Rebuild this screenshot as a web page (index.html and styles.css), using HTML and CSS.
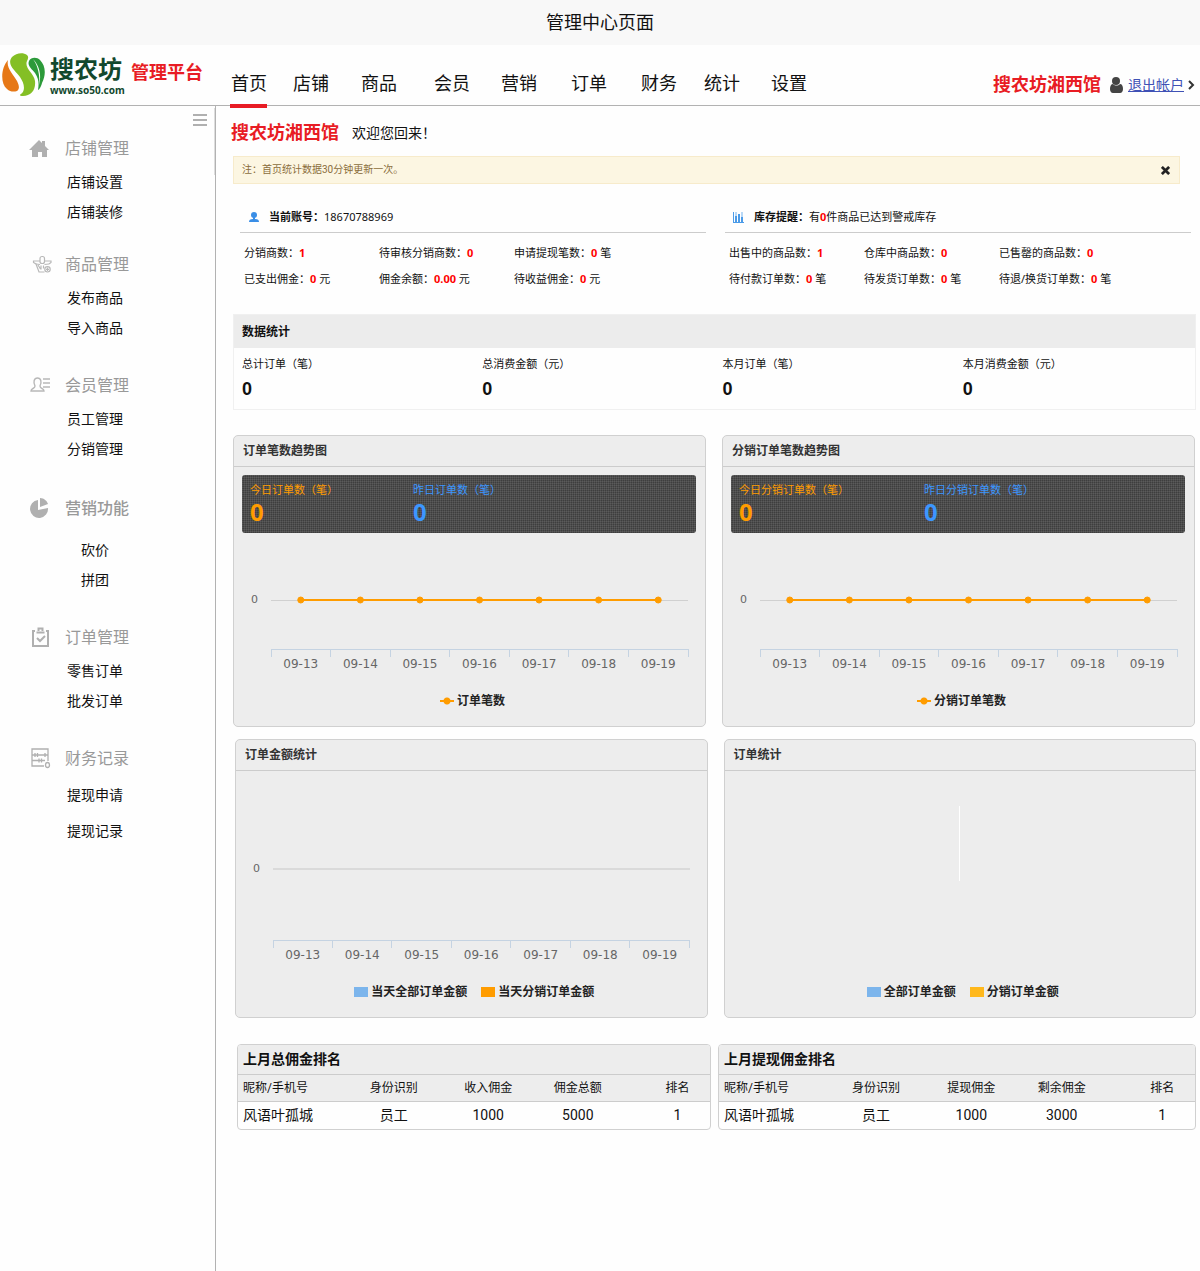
FILE: index.html
```html
<!DOCTYPE html>
<html lang="zh-CN">
<head>
<meta charset="utf-8">
<meta name="viewport" content="width=device-width, initial-scale=1">
<title>管理中心页面</title>
<link rel="stylesheet" href="styles.css">
</head>
<body>
<div class="page-title">管理中心页面</div>

<header class="header">
  <div class="brand">
    <svg class="brand-logo" viewBox="0 0 43 43" aria-hidden="true">
      <path fill="#e67817" d="M6 7C-1 15-2 30 5 36c3 3 7 3 10 2 3-2 2-6 0-10C11 21 4 15 6 7z"/>
      <path fill="#84bf25" d="M10 4c4-4 11-5 15-2 2 2 1 4 0 6-3 7 7 12 8 20 1 9-4 15-12 15-3 0-4-1-2-2 5-4 3-11-1-17C14 18 4 12 10 4z"/>
      <path fill="#2c9a3a" d="M27 8c2-4 8-4 11-1 6 6 6 15 2 23-1 4-3 7-4 7 1-6 1-11-3-17-3-4-8-7-6-12z"/>
      <path fill="#fff" d="M31 6c6 6 9 16 6 26 1-10-1-19-6-26z"/>
    </svg>
    <div class="brand-text">
      <span class="brand-name">搜农坊</span>
      <span class="brand-url">www.so50.com</span>
    </div>
    <span class="brand-sub">管理平台</span>
  </div>
  <nav class="nav">
    <a class="nav-link nav-link--active" href="#">首页</a>
    <a class="nav-link" href="#">店铺</a>
    <a class="nav-link" href="#">商品</a>
    <a class="nav-link" href="#">会员</a>
    <a class="nav-link" href="#">营销</a>
    <a class="nav-link" href="#">订单</a>
    <a class="nav-link" href="#">财务</a>
    <a class="nav-link" href="#">统计</a>
    <a class="nav-link" href="#">设置</a>
  </nav>
  <div class="account">
    <span class="account-shop">搜农坊湘西馆</span>
    <svg class="account-user" viewBox="0 0 13 16" aria-hidden="true"><circle cx="6" cy="4" r="4" fill="#444"/><path fill="#444" d="M3 7C1 7 0 9 0 12c0 2 1 4 3 4h7c2 0 3-2 3-4 0-3-1-5-3-5-2 2-5 2-7 0z"/></svg>
    <a class="account-exit" href="#">退出帐户</a>
    <svg class="account-arrow" viewBox="0 0 8 10" aria-hidden="true"><path d="M2 1l4 4-4 4" fill="none" stroke="#333" stroke-width="2"/></svg>
  </div>
</header>

<div class="layout">
  <aside class="sidebar">
    <button class="sidebar-toggle" type="button" aria-label="收起菜单"><span></span><span></span><span></span></button>
    <nav class="menu">
      <section class="group">
        <h2 class="group-title">
          <svg class="group-icon" viewBox="0 0 20 20" aria-hidden="true"><path fill="#b0b0b0" d="M10 1l3 3V2h3v5l4 4h-2v7h-5v-5H9v5H3v-7H0z"/></svg>店铺管理</h2>
        <ul class="group-list"><li><a href="#">店铺设置</a></li><li><a href="#">店铺装修</a></li></ul>
      </section>
      <section class="group">
        <h2 class="group-title">
          <svg class="group-icon" viewBox="0 0 20 20" aria-hidden="true"><g fill="none" stroke="#b8b8b8" stroke-width="1.200"><path d="M11 6H4.500v1.500L7 9l3 8h5.500M15.500 6H22v1.500L20 9"/><rect x="11" y="1.500" width="4.500" height="7" rx="2"/><path d="M9 10l2.500 4M12 10.500v4M14.500 10.500v3M7 9l4 .5M15.500 9.500L20 9"/><circle cx="18.500" cy="14.300" r="2.700"/><path d="M18.500 12.500v3.500M17 14.300h3"/></g></svg>商品管理</h2>
        <ul class="group-list"><li><a href="#">发布商品</a></li><li><a href="#">导入商品</a></li></ul>
      </section>
      <section class="group">
        <h2 class="group-title">
          <svg class="group-icon" viewBox="0 0 20 20" aria-hidden="true"><g fill="none" stroke="#b8b8b8" stroke-width="1.400"><path d="M6 10c-2-4-1-8 2.500-8s4.500 4 2.500 8c0 3 4 2 4 5H2c0-3 4-2 4-5z"/><path d="M14 3h7M14 7h7M14 11h7"/></g></svg>会员管理</h2>
        <ul class="group-list"><li><a href="#">员工管理</a></li><li><a href="#">分销管理</a></li></ul>
      </section>
      <section class="group group--center">
        <h2 class="group-title">
          <svg class="group-icon" viewBox="0 0 20 20" aria-hidden="true"><path fill="#b0b0b0" d="M9 1a9 9 0 1 0 10 8l-10 2z"/><path fill="#b0b0b0" d="M11-1v9l8-3c-1-3-4-6-8-6z"/></svg>营销功能</h2>
        <ul class="group-list"><li><a href="#">砍价</a></li><li><a href="#">拼团</a></li></ul>
      </section>
      <section class="group">
        <h2 class="group-title">
          <svg class="group-icon" viewBox="0 0 20 20" aria-hidden="true"><g fill="none" stroke="#b0b0b0" stroke-width="2"><path d="M6 3H4v15h15V3h-2"/><path d="M7.500 4.500h8M9.500 3V.5h4V3"/><path d="M8 10l3 3 5-5"/></g></svg>订单管理</h2>
        <ul class="group-list"><li><a href="#">零售订单</a></li><li><a href="#">批发订单</a></li></ul>
      </section>
      <section class="group group--loose">
        <h2 class="group-title">
          <svg class="group-icon" viewBox="0 0 20 20" aria-hidden="true"><g fill="none" stroke="#b0b0b0" stroke-width="1.300"><path d="M19 12V0H3v17h12"/><path d="M3 6h16M3 11.500h13"/><path d="M6 4v4M8.500 4v4M16 4v4M10 9.500v4M12.500 9.500v4"/><ellipse cx="18.500" cy="16" rx="2" ry="2.500"/></g></svg>财务记录</h2>
        <ul class="group-list"><li><a href="#">提现申请</a></li><li><a href="#">提现记录</a></li></ul>
      </section>
    </nav>
  </aside>

  <main class="main">
    <div class="welcome"><strong class="welcome-shop">搜农坊湘西馆</strong><span>欢迎您回来！</span></div>

    <div class="notice">
      <span>注：首页统计数据30分钟更新一次。</span>
      <button class="notice-close" type="button" aria-label="关闭"><svg viewBox="0 0 10 10" aria-hidden="true"><path d="M1 1l8 8M9 1l-8 8" stroke="#222" stroke-width="3"/></svg></button>
    </div>

    <div class="summary">
      <section>
        <h3 class="summary-head">
          <svg class="summary-icon" viewBox="0 0 12 12" aria-hidden="true"><circle cx="6" cy="4" r="3" fill="#3a8ee6"/><path fill="#3a8ee6" d="M5 6h2v2c3 0 4 1 4 3H1c0-2 1-3 4-3z"/></svg>
          <span><b>当前账号：</b>18670788969</span>
        </h3>
        <ul class="summary-list">
          <li>分销商数：<b>1</b></li><li>待审核分销商数：<b>0</b></li><li>申请提现笔数：<b>0</b> 笔</li>
          <li>已支出佣金：<b>0</b> 元</li><li>佣金余额：<b>0.00</b> 元</li><li>待收益佣金：<b>0</b> 元</li>
        </ul>
      </section>
      <section>
        <h3 class="summary-head">
          <svg class="summary-icon" viewBox="0 0 12 12" aria-hidden="true"><path fill="#4b9be8" d="M0 1h1v10H0zM2 5h2v6H2zM5 3h2v8H5zM8 6h2v5H8zM0 11h11v1H0z"/><path fill="#b9d9f7" d="M2 1h2v4H2zM8 1h2v5H8z"/></svg>
          <span><b>库存提醒：</b>有<b class="count">0</b>件商品已达到警戒库存</span>
        </h3>
        <ul class="summary-list">
          <li>出售中的商品数：<b>1</b></li><li>仓库中商品数：<b>0</b></li><li>已售罄的商品数：<b>0</b></li>
          <li>待付款订单数：<b>0</b> 笔</li><li>待发货订单数：<b>0</b> 笔</li><li>待退/换货订单数：<b>0</b> 笔</li>
        </ul>
      </section>
    </div>

    <section class="stats">
      <h3 class="stats-head">数据统计</h3>
      <dl class="stats-body">
        <div><dt>总计订单（笔）</dt><dd>0</dd></div>
        <div><dt>总消费金额（元）</dt><dd>0</dd></div>
        <div><dt>本月订单（笔）</dt><dd>0</dd></div>
        <div><dt>本月消费金额（元）</dt><dd>0</dd></div>
      </dl>
    </section>

    <div class="row row--trend">
      <section class="card">
        <h3 class="card-head">订单笔数趋势图</h3>
        <dl class="board">
          <div class="board-today"><dt>今日订单数（笔）</dt><dd>0</dd></div>
          <div class="board-yesterday"><dt>昨日订单数（笔）</dt><dd>0</dd></div>
        </dl>
        <div class="plot">
          <span class="plot-y">0</span>
          <svg class="plot-area plot-area--trend" aria-hidden="true">
            <line class="base" x1="0" x2="100%" y1="57" y2="57"/>
            <g class="axis"><line x1="0" x2="100%" y1="106" y2="106"/><line x1="0" x2="0" y1="106" y2="114"/><line x1="14.290%" x2="14.290%" y1="106" y2="114"/><line x1="28.570%" x2="28.570%" y1="106" y2="114"/><line x1="42.860%" x2="42.860%" y1="106" y2="114"/><line x1="57.140%" x2="57.140%" y1="106" y2="114"/><line x1="71.430%" x2="71.430%" y1="106" y2="114"/><line x1="85.710%" x2="85.710%" y1="106" y2="114"/><line x1="100%" x2="100%" y1="106" y2="114"/></g>
            <g class="series"><line x1="7.140%" x2="92.860%" y1="57" y2="57"/><circle cx="7.140%" cy="57" r="3"/><circle cx="21.430%" cy="57" r="3"/><circle cx="35.710%" cy="57" r="3"/><circle cx="50%" cy="57" r="3"/><circle cx="64.290%" cy="57" r="3"/><circle cx="78.570%" cy="57" r="3"/><circle cx="92.860%" cy="57" r="3"/></g>
          </svg>
          <div class="plot-x"><span>09-13</span><span>09-14</span><span>09-15</span><span>09-16</span><span>09-17</span><span>09-18</span><span>09-19</span></div>
        </div>
        <div class="legend"><span class="legend-item"><i class="mark-line"></i>订单笔数</span></div>
      </section>
      <section class="card">
        <h3 class="card-head">分销订单笔数趋势图</h3>
        <dl class="board">
          <div class="board-today"><dt>今日分销订单数（笔）</dt><dd>0</dd></div>
          <div class="board-yesterday"><dt>昨日分销订单数（笔）</dt><dd>0</dd></div>
        </dl>
        <div class="plot">
          <span class="plot-y">0</span>
          <svg class="plot-area plot-area--trend" aria-hidden="true">
            <line class="base" x1="0" x2="100%" y1="57" y2="57"/>
            <g class="axis"><line x1="0" x2="100%" y1="106" y2="106"/><line x1="0" x2="0" y1="106" y2="114"/><line x1="14.290%" x2="14.290%" y1="106" y2="114"/><line x1="28.570%" x2="28.570%" y1="106" y2="114"/><line x1="42.860%" x2="42.860%" y1="106" y2="114"/><line x1="57.140%" x2="57.140%" y1="106" y2="114"/><line x1="71.430%" x2="71.430%" y1="106" y2="114"/><line x1="85.710%" x2="85.710%" y1="106" y2="114"/><line x1="100%" x2="100%" y1="106" y2="114"/></g>
            <g class="series"><line x1="7.140%" x2="92.860%" y1="57" y2="57"/><circle cx="7.140%" cy="57" r="3"/><circle cx="21.430%" cy="57" r="3"/><circle cx="35.710%" cy="57" r="3"/><circle cx="50%" cy="57" r="3"/><circle cx="64.290%" cy="57" r="3"/><circle cx="78.570%" cy="57" r="3"/><circle cx="92.860%" cy="57" r="3"/></g>
          </svg>
          <div class="plot-x"><span>09-13</span><span>09-14</span><span>09-15</span><span>09-16</span><span>09-17</span><span>09-18</span><span>09-19</span></div>
        </div>
        <div class="legend"><span class="legend-item"><i class="mark-line"></i>分销订单笔数</span></div>
      </section>
    </div>

    <div class="row row--amount">
      <section class="card">
        <h3 class="card-head">订单金额统计</h3>
        <div class="plot plot--amount">
          <span class="plot-y">0</span>
          <svg class="plot-area plot-area--amount" aria-hidden="true">
            <line class="base base--thick" x1="0" x2="100%" y1="79" y2="79"/>
            <g class="axis"><line x1="0" x2="100%" y1="150" y2="150"/><line x1="0" x2="0" y1="150" y2="158"/><line x1="14.290%" x2="14.290%" y1="150" y2="158"/><line x1="28.570%" x2="28.570%" y1="150" y2="158"/><line x1="42.860%" x2="42.860%" y1="150" y2="158"/><line x1="57.140%" x2="57.140%" y1="150" y2="158"/><line x1="71.430%" x2="71.430%" y1="150" y2="158"/><line x1="85.710%" x2="85.710%" y1="150" y2="158"/><line x1="100%" x2="100%" y1="150" y2="158"/></g>
          </svg>
          <div class="plot-x"><span>09-13</span><span>09-14</span><span>09-15</span><span>09-16</span><span>09-17</span><span>09-18</span><span>09-19</span></div>
        </div>
        <div class="legend"><span class="legend-item"><i class="mark-box mark-box--blue"></i>当天全部订单金额</span><span class="legend-item"><i class="mark-box mark-box--orange"></i>当天分销订单金额</span></div>
      </section>
      <section class="card">
        <h3 class="card-head">订单统计</h3>
        <div class="pie-axis"></div>
        <div class="legend"><span class="legend-item"><i class="mark-box mark-box--blue"></i>全部订单金额</span><span class="legend-item"><i class="mark-box mark-box--yellow"></i>分销订单金额</span></div>
      </section>
    </div>

    <div class="row row--rank">
      <section class="rank">
        <h3 class="rank-head">上月总佣金排名</h3>
        <table class="rank-table">
          <thead><tr><th>昵称/手机号</th><th>身份识别</th><th>收入佣金</th><th>佣金总额</th><th>排名</th></tr></thead>
          <tbody><tr><td>风语叶孤城</td><td>员工</td><td>1000</td><td>5000</td><td>1</td></tr></tbody>
        </table>
      </section>
      <section class="rank">
        <h3 class="rank-head">上月提现佣金排名</h3>
        <table class="rank-table">
          <thead><tr><th>昵称/手机号</th><th>身份识别</th><th>提现佣金</th><th>剩余佣金</th><th>排名</th></tr></thead>
          <tbody><tr><td>风语叶孤城</td><td>员工</td><td>1000</td><td>3000</td><td>1</td></tr></tbody>
        </table>
      </section>
    </div>
  </main>
</div>
</body>
</html>
```
FILE: styles.css
```css
* { box-sizing: border-box; margin: 0; padding: 0; }

body {
  display: flex;
  flex-direction: column;
  min-height: 100vh;
  background: #fefefe;
  color: #111;
  font: 14px/20px Roboto, "Noto Sans CJK SC", sans-serif;
}

ul { list-style: none; }
a { color: inherit; text-decoration: none; }
button { border: 0; background: none; cursor: pointer; }
svg { display: block; flex: none; }

.page-title {
  background: #f8f8f8;
  font-size: 18px;
  line-height: 45px;
  text-align: center;
}

/* Header */
.header {
  display: flex;
  height: 61px;
  border-bottom: 1px solid #b2b2b2;
}

.brand {
  display: flex;
  align-items: flex-start;
  width: 230px;
  padding: 8px 0 0 2px;
  flex: none;
}
.brand-logo { width: 43px; height: 43px; }
.brand-text {
  display: flex;
  flex-direction: column;
  width: 81px;
  padding: 2px 0 0 5px;
  color: #12482d;
  font-weight: bold;
}
.brand-name { font-size: 24px; line-height: 30px; }
.brand-url {
  font-family: "Noto Sans", sans-serif;
  font-size: 10px;
  line-height: 10px;
}
.brand-sub {
  padding: 8px 0 0 5px;
  color: #e81c24;
  font-size: 18px;
  font-weight: bold;
  line-height: 24px;
}

.nav {
  display: grid;
  grid-template-columns: 62px 68px 73px 67px 70px 70px 63px 67px 37px;
  justify-items: start;
  margin-bottom: -3px;
}
.nav-link {
  padding: 27px 0 0 1px;
  border-bottom: 4px solid transparent;
  font-size: 18px;
  line-height: 24px;
}
.nav-link--active { border-bottom-color: #e81c24; }

.account {
  display: flex;
  align-items: center;
  margin-left: auto;
  padding: 20px 5px 0 0;
}
.account-shop { margin-right: 9px; color: #e81c24; font-size: 18px; font-weight: bold; }
.account-user { width: 13px; height: 16px; margin-right: 5px; }
.account-exit { margin-right: 3px; color: #3f51b5; text-decoration: underline; }
.account-arrow { width: 8px; height: 10px; }

/* Sidebar */
.layout { display: flex; flex: 1; }

.sidebar {
  position: relative;
  flex: none;
  width: 216px;
  border-right: 1px solid #b2b2b2;
}
.sidebar::after {
  content: "";
  position: absolute;
  top: 2px;
  right: 0;
  width: 1px;
  height: 67px;
  background: #ddd;
}
.sidebar-toggle {
  display: flex;
  flex-direction: column;
  gap: 3px;
  width: 14px;
  height: 12px;
  margin: 8px 8px 0 auto;
}
.sidebar-toggle span { height: 2px; background: #b0b0b0; }

.menu {
  display: grid;
  grid-template-rows: 116px 121px 123px 129px 121px auto;
  padding: 8px 0 0 29px;
}
.group-title {
  display: flex;
  align-items: center;
  gap: 16px;
  color: #999;
  font-size: 16px;
  font-weight: 400;
  line-height: 30px;
}
.group-icon { width: 20px; height: 20px; overflow: visible; }
.group-list { padding: 3px 0 0 38px; line-height: 30px; }
.group--center .group-title { font-weight: 500; }
.group--center .group-list { padding: 11px 0 0 52px; }
.group--loose .group-list { line-height: 36px; }

/* Main column */
.main { flex: 1; min-width: 0; padding: 14px 4px 40px 17px; }

.welcome { display: flex; align-items: center; gap: 13px; height: 26px; margin-left: -2px; }
.welcome-shop { color: #e81c24; font-size: 18px; }

.notice {
  display: flex;
  align-items: center;
  justify-content: space-between;
  margin: 10px 16px 0 0;
  padding: 0 9px 0 8px;
  border: 1px solid #f7ebcb;
  background: #fcf6e2;
  color: #8a6d3b;
  font-size: 10px;
  line-height: 26px;
}
.notice-close { width: 9px; height: 9px; }

.summary,
.stats { font-family: "Noto Sans", "Noto Sans CJK SC", sans-serif; }

.summary {
  display: grid;
  grid-template-columns: 1fr 1fr;
  gap: 19px;
  margin: 18px 5px 0 7px;
  font-size: 11px;
}
.summary-head {
  display: flex;
  align-items: center;
  gap: 9px;
  padding-left: 8px;
  border-bottom: 1px solid #ccc;
  font-size: 11px;
  font-weight: 400;
  line-height: 30px;
}
.summary-icon { width: 12px; height: 12px; }
.summary-list {
  display: grid;
  grid-template-columns: 135fr 135fr 192fr;
  padding: 7px 0 0 4px;
  line-height: 26px;
}
.summary-list b,
.count { color: #f00; }

.stats { margin-top: 22px; border: 1px solid #f0f0f0; }
.stats-head {
  padding-left: 8px;
  background: #ececec;
  font-size: 12px;
  line-height: 33px;
}
.stats-body {
  display: grid;
  grid-template-columns: repeat(4, 1fr);
  padding: 6px 0 5px;
}
.stats-body div { padding-left: 8px; }
.stats-body dt { font-size: 11px; line-height: 20px; }
.stats-body dd {
  font: bold 18px/30px "Liberation Sans", sans-serif;
}

/* Cards */
.row { display: grid; grid-template-columns: 1fr 1fr; gap: 16px; }
.row--trend { margin-top: 25px; padding-right: 1px; }
.row--amount { margin-top: 12px; padding-left: 2px; }
.row--rank { grid-template-columns: 474fr 478fr; gap: 7px; margin-top: 26px; padding-left: 4px; }

.card {
  display: flex;
  flex-direction: column;
  min-width: 0;
  padding-bottom: 15px;
  border: 1px solid #d0d0d0;
  border-radius: 5px;
  background: #ededed;
}
.card-head {
  padding: 1px 0 0 9px;
  border-bottom: 1px solid #ccc;
  color: #333;
  font-size: 12px;
  line-height: 29px;
}

.board {
  display: flex;
  gap: 75px;
  margin: 8px 9px 0 8px;
  padding: 5px 8px 9px;
  border-radius: 3px;
  background:
    linear-gradient(rgba(255, 255, 255, .08) 1px, transparent 1px) 0 0 / 2px 2px,
    linear-gradient(90deg, rgba(255, 255, 255, .08) 1px, transparent 1px) 0 0 / 2px 2px,
    #3e3e3e;
  font-family: "Noto Sans", "Noto Sans CJK SC", sans-serif;
}
.board dt { font-size: 11px; line-height: 20px; }
.board dd { font-size: 24px; font-weight: bold; line-height: 24px; }
.board-today { color: #ff9c00; }
.board-yesterday { color: #3c96ff; }

.plot {
  display: grid;
  grid-template-columns: 20px 1fr;
  align-items: center;
  margin: 10px 17px 0 17px;
  color: #666;
  font: 12px/14px "DejaVu Sans", sans-serif;
}
.plot--amount { margin-top: 19px; }
.plot-y { font-size: 11px; }
.plot-area { width: 100%; overflow: visible; shape-rendering: crispEdges; }
.plot-area--trend { height: 114px; }
.plot-area--amount { height: 158px; }
.plot-x {
  grid-column: 2;
  display: grid;
  grid-template-columns: repeat(7, 1fr);
  text-align: center;
}
.base { stroke: #d0d0d0; }
.base--thick { stroke: #dadada; stroke-width: 2; }
.axis { stroke: #c5d3e2; }
.series { stroke: #ff9c00; stroke-width: 2; fill: #ff9c00; shape-rendering: auto; }
.series circle { stroke-width: 1; }

.pie-axis { width: 1px; height: 75px; margin: 35px auto 0; background: #fff; }

.legend {
  display: flex;
  justify-content: center;
  gap: 14px;
  margin-top: auto;
  padding: 20px 0 0 6px;
  color: #222;
  font-size: 12px;
  font-weight: bold;
}
.legend-item { display: flex; align-items: center; gap: 3px; }
.mark-box { width: 14px; height: 10px; }
.mark-box--blue { background: #7cb5ec; }
.mark-box--orange { background: #ff9c00; }
.mark-box--yellow { background: #ffb81c; }
.mark-line {
  width: 14px;
  height: 8px;
  background:
    radial-gradient(circle, #ff9c00 3px, transparent 4px),
    linear-gradient(#ff9c00, #ff9c00) center / 100% 2px no-repeat;
}

/* Ranking tables */
.rank {
  overflow: hidden;
  border: 1px solid #d0d0d0;
  border-radius: 4px;
  background: #fefefe;
}
.rank-head {
  padding-left: 5px;
  background: #ededed;
  font-size: 14px;
  line-height: 29px;
}
.rank-table { width: 100%; table-layout: fixed; border-collapse: collapse; }
.rank-table th {
  width: 18%;
  border: solid #ccc;
  border-width: 1px 0;
  background: #ededed;
  font-size: 12px;
  font-weight: 400;
  line-height: 26px;
}
.rank-table th:nth-child(1),
.rank-table th:nth-child(2) { width: 22%; }
.rank-table th:nth-child(4) { width: 20%; }
.rank-table td { line-height: 27px; text-align: center; }
.rank-table th:first-child,
.rank-table td:first-child { padding-left: 5px; text-align: left; white-space: nowrap; }
.rank-table th:last-child,
.rank-table td:last-child { padding-left: 20px; }
```
